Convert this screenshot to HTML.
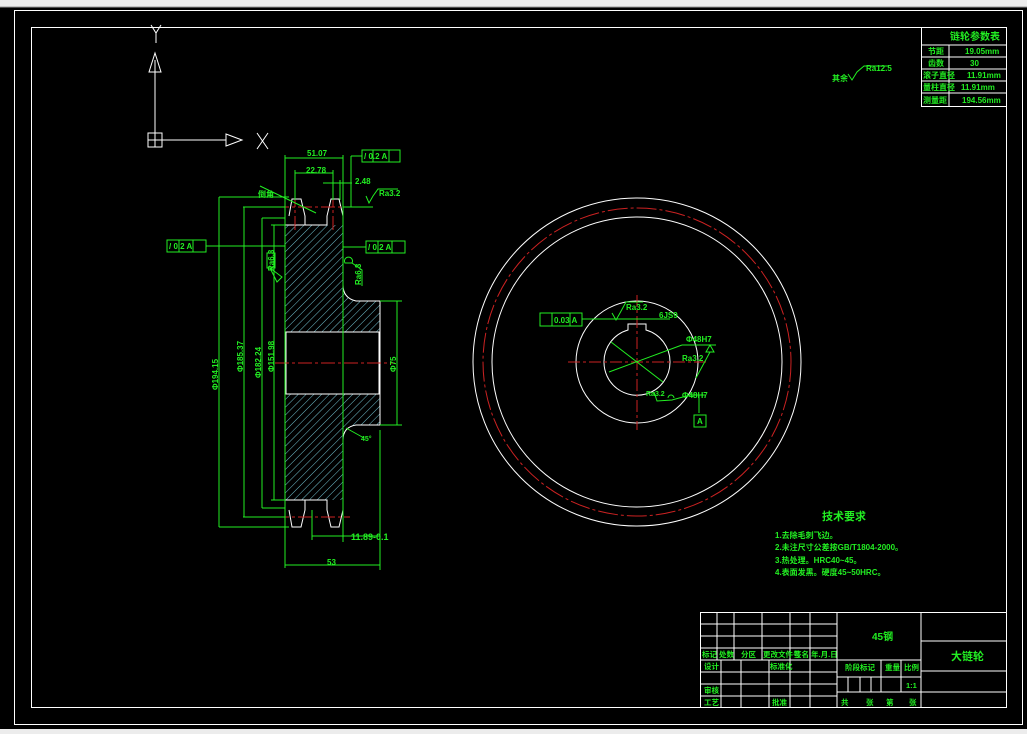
<!DOCTYPE html>
<html><head><meta charset="utf-8"><style>
html,body{margin:0;padding:0;width:1027px;height:734px;overflow:hidden;background:#000}
svg{display:block}
text{font-family:"Liberation Sans","Noto Sans CJK SC",sans-serif;fill:#22ee22;font-weight:bold}
</style></head><body>
<svg width="1027" height="734" viewBox="0 0 1027 734" xmlns="http://www.w3.org/2000/svg">
<defs>
<pattern id="h" width="5.5" height="5.5" patternUnits="userSpaceOnUse" patternTransform="rotate(45)">
<line x1="0" y1="0" x2="0" y2="5.5" stroke="#7fd8e8" stroke-width="0.9"/>
</pattern>
</defs>
<rect x="0" y="0" width="1027" height="7" fill="#ececec"/>
<line x1="0" y1="7" x2="1027" y2="7" stroke="#999"/>
<rect x="0" y="729" width="1027" height="5" fill="#ececec"/>
<rect x="14.5" y="10.5" width="1008" height="714" fill="none" stroke="#fff"/>
<rect x="31.5" y="27.5" width="975" height="680" fill="none" stroke="#fff"/>

<g stroke="#fff" fill="none">
<line x1="155" y1="60" x2="155" y2="140"/>
<path d="M149 72 L155 53 L161 72 Z"/>
<rect x="148" y="133" width="14" height="14"/><line x1="155" y1="133" x2="155" y2="147"/><line x1="148" y1="140" x2="162" y2="140"/>
<line x1="162" y1="140" x2="226" y2="140"/>
<path d="M226 134 L242 140 L226 146 Z"/>
<path d="M257 133 L268 149 M268 133 L257 149"/>
<path d="M151 25 L156 33 L161 25 M156 33 L156 43"/>
</g>

<g stroke="#fff" fill="none">
<rect x="921.5" y="27.5" width="85" height="79"/>
<line x1="921" y1="45" x2="1006" y2="45"/><line x1="921" y1="57" x2="1006" y2="57"/>
<line x1="921" y1="69" x2="1006" y2="69"/><line x1="921" y1="81" x2="1006" y2="81"/><line x1="921" y1="93" x2="1006" y2="93"/>
<line x1="949" y1="45" x2="949" y2="106"/>
</g>
<g font-size="8">
<text x="950" y="40" font-size="10">链轮参数表</text>
<text x="928" y="54">节距</text><text x="965" y="54">19.05mm</text>
<text x="928" y="66">齿数</text><text x="970" y="66">30</text>
<text x="923" y="78">滚子直径</text><text x="967" y="78">11.91mm</text>
<text x="923" y="90">量柱直径</text><text x="961" y="90">11.91mm</text>
<text x="923" y="103">测量距</text><text x="962" y="103">194.56mm</text>
<text x="832" y="81">其余</text>
<text x="866" y="71">Ra12.5</text>
</g>
<path d="M848 74 L852 80 L857 72 L864 66 L888 66" stroke="#22ee22" fill="none"/>

<g>
<path d="M285 225 L285 301 L285 332 L380 332 L380 301 L356 301 Q343 298 343 285 L343 225 Z" fill="url(#h)"/>
<path d="M285 394 L285 500 L343 500 L343 440 Q343 427 356 425 L380 425 L380 394 Z" fill="url(#h)"/>
</g>
<g stroke="#fff" fill="none" stroke-width="1">
<path d="M285 218 L285 507"/>
<path d="M343 218 L343 285 Q343 298 356 301 L380 301 L380 425 L356 425 Q343 427 343 440 L343 507"/>
<path d="M289 216 L292 199 L301 199 L305 216 L305 225 L327 225 L327 216 L331 199 L339 199 L343 216"/>
<path d="M289 510 L292 527 L301 527 L305 510 L305 500 L327 500 L327 510 L331 527 L339 527 L343 510"/>
<rect x="286" y="332" width="93" height="62"/>
<line x1="285" y1="225" x2="305" y2="225"/><line x1="285" y1="500" x2="305" y2="500"/>
</g>
<g stroke="#cc2222" stroke-dasharray="14 3 3 3">
<line x1="275" y1="363" x2="395" y2="363"/>
<line x1="275" y1="207" x2="350" y2="207"/>
<line x1="275" y1="517" x2="350" y2="517"/>
<line x1="295" y1="193" x2="295" y2="232"/><line x1="333" y1="193" x2="333" y2="232"/>
</g>
<g stroke="#22ee22" fill="none">
<line x1="219" y1="197" x2="289" y2="197"/><line x1="219" y1="527" x2="289" y2="527"/><line x1="219" y1="197" x2="219" y2="527"/>
<line x1="243" y1="207" x2="285" y2="207"/><line x1="243" y1="517" x2="285" y2="517"/><line x1="244" y1="207" x2="244" y2="517"/>
<line x1="262" y1="218" x2="285" y2="218"/><line x1="262" y1="508" x2="285" y2="508"/><line x1="262" y1="218" x2="262" y2="508"/>
<line x1="271" y1="225" x2="285" y2="225"/><line x1="271" y1="500" x2="285" y2="500"/><line x1="274" y1="225" x2="274" y2="500"/>
<line x1="380" y1="301" x2="402" y2="301"/><line x1="380" y1="425" x2="402" y2="425"/><line x1="397" y1="301" x2="397" y2="425"/>
<line x1="285" y1="155" x2="285" y2="568"/><line x1="343" y1="155" x2="343" y2="542"/><line x1="380" y1="430" x2="380" y2="570"/>
<line x1="285" y1="565" x2="380" y2="565"/>
<line x1="285" y1="158" x2="343" y2="158"/>
<line x1="295" y1="173" x2="333" y2="173"/><line x1="295" y1="170" x2="295" y2="200"/><line x1="333" y1="170" x2="333" y2="200"/>
<line x1="323" y1="183" x2="352" y2="183"/><line x1="340" y1="180" x2="340" y2="200"/>
<line x1="351" y1="156" x2="351" y2="207"/><line x1="351" y1="156" x2="362" y2="156"/>
<line x1="343" y1="207" x2="373" y2="207"/>
<path d="M366 196 L369 203 L373 196 L378 189 L398 189"/>
<rect x="362" y="150" width="38" height="12"/><line x1="373" y1="150" x2="373" y2="162"/><line x1="389" y1="150" x2="389" y2="162"/>
<rect x="167" y="240" width="39" height="12"/><line x1="179" y1="240" x2="179" y2="252"/><line x1="193" y1="240" x2="193" y2="252"/>
<line x1="206" y1="246" x2="285" y2="246"/>
<rect x="366" y="241" width="39" height="12"/><line x1="378" y1="241" x2="378" y2="253"/><line x1="392" y1="241" x2="392" y2="253"/>
<line x1="343" y1="247" x2="366" y2="247"/>
<line x1="260" y1="186" x2="316" y2="213"/>
<path d="M267 253 L267 268 L275 268 L275 253 Z"/><path d="M270 268 L282 277 L277 282 Z"/>
<path d="M345 263 A4 4 0 1 1 352 263 Z"/><path d="M352 263 L362 270 L362 286"/>
<line x1="346" y1="428" x2="364" y2="438"/>
<line x1="312" y1="536" x2="380" y2="536"/><line x1="312" y1="510" x2="312" y2="540"/>
</g>
<g font-size="8">
<text x="307" y="156">51.07</text>
<text x="306" y="173">22.78</text>
<text x="355" y="184">2.48</text>
<text x="379" y="196">Ra3.2</text>
<text x="258" y="197">倒角</text>
<text x="364" y="159">/ 0.2  A</text>
<text x="169" y="249">/ 0.2  A</text>
<text x="368" y="250">/ 0.2  A</text>
<text x="351" y="540" font-size="9">11.89-0.1</text>
<text x="327" y="565">53</text>
<text x="361" y="441" font-size="7">45°</text>
<text transform="translate(218,390) rotate(-90)">Φ194.15</text>
<text transform="translate(243,372) rotate(-90)">Φ185.37</text>
<text transform="translate(261,378) rotate(-90)">Φ182.24</text>
<text transform="translate(274,372) rotate(-90)">Φ151.98</text>
<text transform="translate(396,372) rotate(-90)">Φ75</text>
<text transform="translate(274,271) rotate(-90)">Ra6.3</text>
<text transform="translate(361,285) rotate(-90)">Ra6.3</text>
</g>

<g fill="none">
<circle cx="637" cy="362" r="164" stroke="#fff"/>
<circle cx="637" cy="362" r="154" stroke="#cc2222" stroke-dasharray="20 3 3 3"/>
<circle cx="637" cy="362" r="145" stroke="#fff"/>
<circle cx="637" cy="362" r="61" stroke="#fff"/>
<path d="M628 330 L628 324 L646 324 L646 330 A33 33 0 0 1 670 362 A33 33 0 0 1 646 394 A33 33 0 0 1 604 362 A33 33 0 0 1 628 330 Z" stroke="#fff"/>
<g stroke="#cc2222" stroke-dasharray="12 3 3 3">
<line x1="568" y1="362" x2="706" y2="362"/><line x1="637" y1="295" x2="637" y2="430"/>
</g>
<g stroke="#22ee22">
<rect x="540" y="313" width="42" height="13"/><line x1="552" y1="313" x2="552" y2="326"/><line x1="570" y1="313" x2="570" y2="326"/>
<line x1="582" y1="319" x2="670" y2="319"/>
<path d="M612 313 L616 320 L620 313 L626 302 L643 302"/>
<line x1="611" y1="342" x2="663" y2="382"/><line x1="609" y1="372" x2="682" y2="345"/>
<line x1="682" y1="345" x2="716" y2="345"/>
<path d="M706 352 L710 345 L714 352 Z"/><line x1="696" y1="378" x2="710" y2="352"/>
<path d="M654 392 L657 401 L672 400 L690 395 L705 395"/>
<path d="M668 398 A3 3 0 1 1 674 398"/>
<line x1="699" y1="395" x2="699" y2="413"/>
<rect x="694" y="415" width="12" height="12"/>
</g>
</g>
<g font-size="8">
<text x="554" y="323">0.03  A</text>
<text x="626" y="310">Ra3.2</text>
<text x="659" y="318">6JS9</text>
<text x="686" y="342">Φ48H7</text>
<text x="682" y="361">Ra3.2</text>
<text x="682" y="398">Φ48H7</text>
<text x="646" y="396" font-size="7">Ra3.2</text>
<text x="697" y="424">A</text>
</g>

<g font-size="8">
<text x="822" y="520" font-size="11">技术要求</text>
<text x="775" y="538">1.去除毛刺飞边。</text>
<text x="775" y="550">2.未注尺寸公差按GB/T1804-2000。</text>
<text x="775" y="563">3.热处理。HRC40~45。</text>
<text x="775" y="575">4.表面发黑。硬度45~50HRC。</text>
</g>

<g stroke="#fff" fill="none">
<rect x="700.5" y="612.5" width="306" height="95"/>
<line x1="700" y1="624" x2="837" y2="624"/><line x1="700" y1="636" x2="837" y2="636"/><line x1="700" y1="648" x2="837" y2="648"/>
<line x1="700" y1="660" x2="921" y2="660"/><line x1="700" y1="672" x2="837" y2="672"/><line x1="700" y1="684" x2="837" y2="684"/><line x1="700" y1="696" x2="837" y2="696"/>
<line x1="717" y1="612" x2="717" y2="660"/><line x1="734" y1="612" x2="734" y2="660"/><line x1="762" y1="612" x2="762" y2="660"/>
<line x1="790" y1="612" x2="790" y2="707"/><line x1="810" y1="612" x2="810" y2="707"/><line x1="837" y1="612" x2="837" y2="707"/>
<line x1="721" y1="660" x2="721" y2="707"/><line x1="741" y1="660" x2="741" y2="707"/><line x1="769" y1="660" x2="769" y2="707"/>
<line x1="921" y1="612" x2="921" y2="707"/>
<line x1="837" y1="677" x2="921" y2="677"/><line x1="837" y1="692" x2="1006" y2="692"/>
<line x1="881" y1="660" x2="881" y2="692"/><line x1="901" y1="660" x2="901" y2="692"/>
<line x1="848" y1="677" x2="848" y2="692"/><line x1="860" y1="677" x2="860" y2="692"/><line x1="871" y1="677" x2="871" y2="692"/>
<line x1="921" y1="641" x2="1006" y2="641"/><line x1="921" y1="671" x2="1006" y2="671"/>
</g>
<g font-size="7.5">
<text x="702" y="657">标记</text><text x="719" y="657">处数</text><text x="741" y="657">分区</text><text x="763" y="657">更改文件号</text><text x="794" y="657">签名</text><text x="811" y="657">年.月.日</text>
<text x="704" y="669">设计</text><text x="770" y="669">标准化</text>
<text x="704" y="693">审核</text><text x="704" y="705">工艺</text><text x="772" y="705">批准</text>
<text x="845" y="670">阶段标记</text><text x="885" y="670">重量</text><text x="904" y="670">比例</text>
<text x="906" y="688">1:1</text>
<text x="841" y="705">共</text><text x="866" y="705">张</text><text x="886" y="705">第</text><text x="909" y="705">张</text>
<text x="872" y="640" font-size="10">45钢</text>
<text x="951" y="660" font-size="11">大链轮</text>
</g>
</svg>
</body></html>
